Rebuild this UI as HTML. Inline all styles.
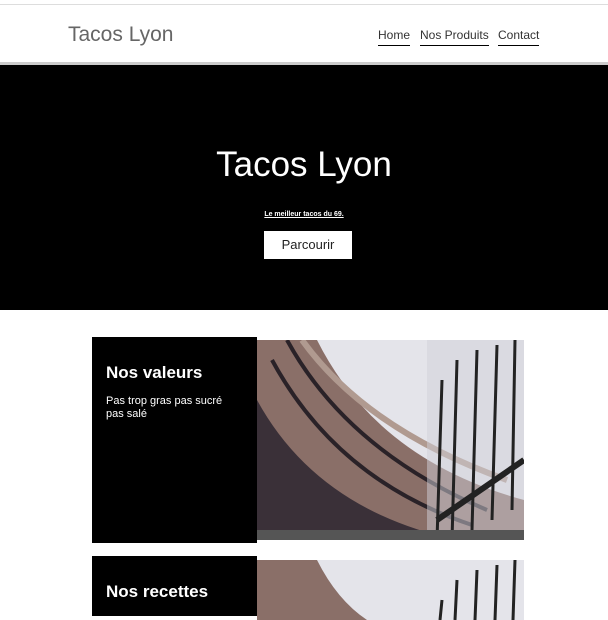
<!DOCTYPE html>
<html><head><meta charset="utf-8"><style>
*{margin:0;padding:0;box-sizing:border-box}
body{width:608px;height:609px;overflow:hidden;background:#fff;font-family:"Liberation Sans",sans-serif;position:relative}
.topline{position:absolute;top:4px;left:0;width:608px;height:1px;background:#ddd}
.brand{position:absolute;left:68px;top:23px;font-size:21px;color:#666}
.nav{position:absolute;top:28px;font-size:12px;color:#333;border-bottom:1.5px solid #000;padding-bottom:3px}
.hb{position:absolute;top:62px;left:0;width:608px;height:3px;background:#ccc}
.hero{position:absolute;top:65px;left:0;width:608px;height:245px;background:#000;color:#fff;text-align:center}
.hero h1{position:absolute;top:80px;width:100%;font-weight:normal;font-size:35px}
.hero .sub{position:absolute;top:146px;width:100%;font-size:7px;font-weight:bold;text-decoration:underline}
.btn{position:absolute;left:264px;top:166px;width:88px;height:28px;background:#fff;color:#222;font-size:13px;line-height:28px}
.card{position:absolute;left:92px;width:165px;background:#000;color:#fff;padding:26px 14px}
.card h2{font-size:17px;font-weight:bold;margin-bottom:12px}
.card p{font-size:11px;line-height:13px}
.img{position:absolute;left:257px;width:267px;overflow:hidden}
</style></head><body>
<div class="topline"></div>
<div class="brand">Tacos Lyon</div>
<div class="nav" style="left:378px">Home</div>
<div class="nav" style="left:420px">Nos Produits</div>
<div class="nav" style="left:498px">Contact</div>
<div class="hb"></div>
<div class="hero"><h1>Tacos Lyon</h1><div class="sub">Le meilleur tacos du 69.</div><div class="btn">Parcourir</div></div>
<div class="card" style="top:337px;height:206px"><h2>Nos valeurs</h2><p>Pas trop gras pas sucré<br>pas salé</p></div>
<div class="img" style="top:340px;height:200px"><svg width="267" height="200" viewBox="0 0 267 200">
<rect width="267" height="200" fill="#e4e4ea"/>
<path d="M0 0 L60 0 Q120 120 267 160 L267 200 L0 200Z" fill="#8a6f68"/>
<path d="M0 60 Q60 170 200 200 L0 200Z" fill="#3a3038"/>
<path d="M30 0 Q90 110 230 170" stroke="#2a2228" stroke-width="4" fill="none"/>
<path d="M15 20 Q80 140 215 185" stroke="#2a2228" stroke-width="4" fill="none"/>
<path d="M45 0 Q110 90 250 140" stroke="#b09a90" stroke-width="6" fill="none"/>
<rect x="170" y="0" width="97" height="200" fill="#cfd0d8" opacity=".5"/>
<path d="M185 40 L180 200 M200 20 L195 200 M220 10 L215 190 M240 5 L235 180 M258 0 L255 170" stroke="#222" stroke-width="3"/>
<path d="M180 180 L267 120" stroke="#222" stroke-width="6"/>
<path d="M0 195 L267 195" stroke="#555" stroke-width="10"/>
</svg></div>
<div class="card" style="top:556px;height:60px"><h2>Nos recettes</h2></div>
<div class="img" style="top:560px;height:60px"><svg width="267" height="60" viewBox="0 0 267 60">
<rect width="267" height="60" fill="#e4e4ea"/>
<path d="M0 0 L60 0 Q80 40 110 60 L0 60Z" fill="#8a6f68"/>
<path d="M185 40 L183 60 M200 20 L198 60 M220 10 L218 60 M240 5 L238 60 M258 0 L256 60" stroke="#222" stroke-width="3"/>
</svg></div>
</body></html>
